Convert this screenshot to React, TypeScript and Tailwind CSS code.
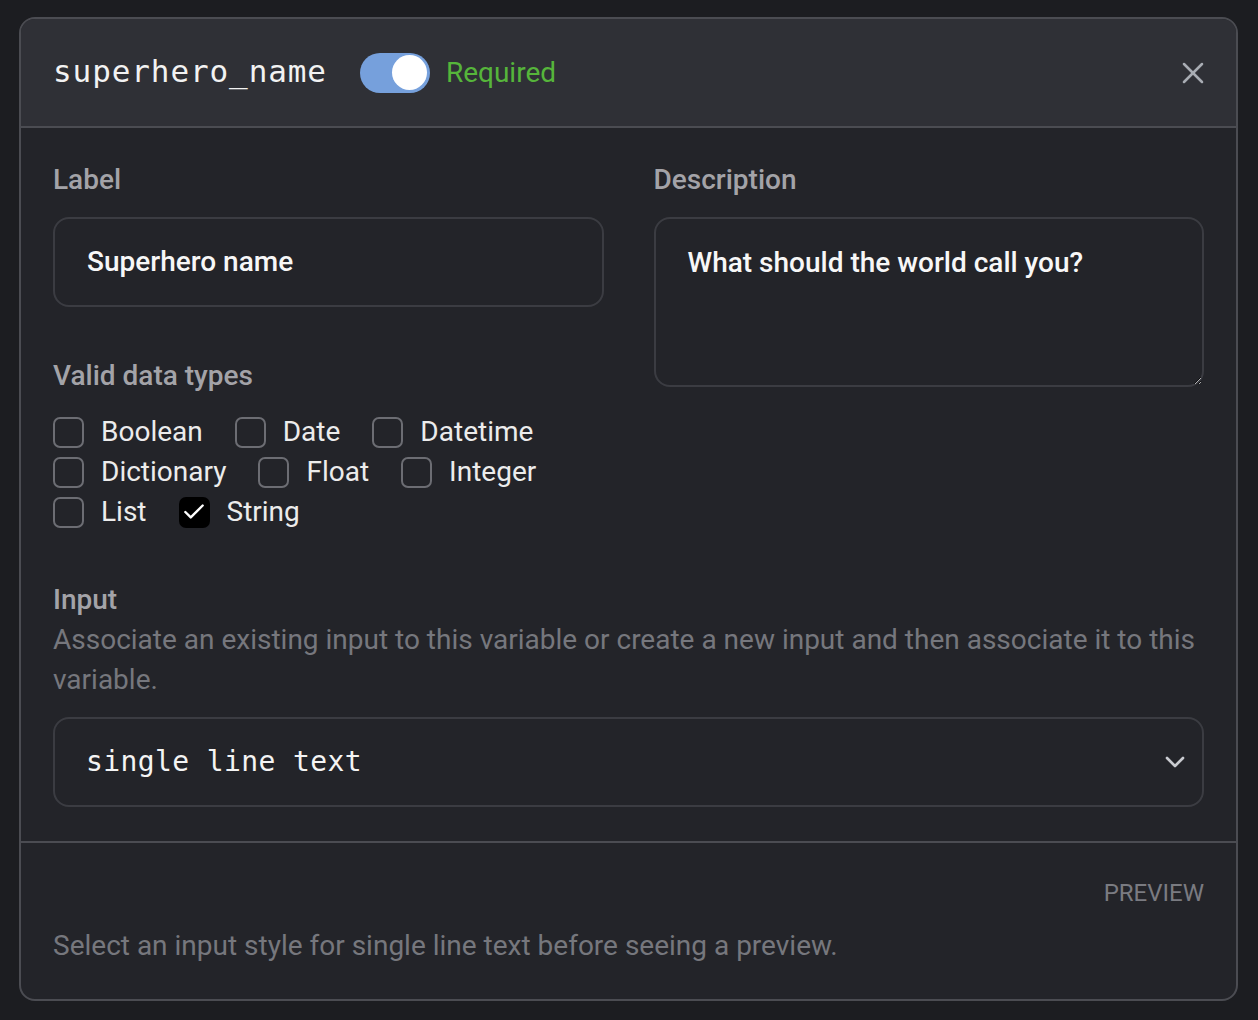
import React, { useState } from 'react';
import { X, ChevronDown, Check } from 'lucide-react';

const dataTypes = ['Boolean', 'Date', 'Datetime', 'Dictionary', 'Float', 'Integer', 'List', 'String'];

const sans = { fontFamily: 'Roboto, "Noto Sans", sans-serif' };
const mono = { fontFamily: '"DejaVu Sans Mono", "Liberation Mono", monospace' };

export default function App() {
  const [required, setRequired] = useState(true);
  const [checked, setChecked] = useState<string[]>(['String']);

  const toggle = (t: string) =>
    setChecked(prev => (prev.includes(t) ? prev.filter(x => x !== t) : [...prev, t]));

  return (
    <div className="min-h-[1020px] bg-[#1c1d21] px-[19px] pt-[17px] pb-[22px]" style={sans}>
      <div className="w-[1219px] rounded-[16px] border-2 border-[#4b4c52] bg-[#232429] overflow-hidden">
        {/* Header */}
        <div className="h-[109px] bg-[#2f3036] border-b-2 border-[#4b4c52] flex items-center pl-[32px] pr-[25px]">
          <span className="text-[31px] leading-[40px] -mt-[3px] text-[#f2f2f2] tracking-[0.9px]" style={mono}>superhero_name</span>
          <button
            onClick={() => setRequired(!required)}
            className={`ml-[33px] w-[70px] h-[40px] rounded-full flex items-center px-[3px] ${required ? 'bg-[#76a0dc] justify-end' : 'bg-[#55565c] justify-start'}`}
          >
            <span className="w-[35px] h-[35px] rounded-full bg-white block" />
          </button>
          <span className="ml-[16px] text-[28px] text-[#56b53b]">Required</span>
          <X className="ml-auto w-[36px] h-[36px] text-[#a9adb4]" strokeWidth={1.7} />
        </div>

        {/* Body */}
        <div className="px-[32px] pt-[32px] pb-[34px]">
          <div className="grid grid-cols-2 gap-x-[50px]">
            <div>
              <div className="text-[28px] leading-[40px] font-medium text-[#a3a3a8]">Label</div>
              <div className="mt-[17px] h-[90px] rounded-[16px] border-2 border-[#3b3c42] flex items-center px-[32px]">
                <span className="text-[28px] font-medium text-[#f7f7f7]">Superhero name</span>
              </div>
              <div className="mt-[49px] text-[28px] leading-[40px] font-medium text-[#a3a3a8]">Valid data types</div>
              <div className="mt-[16px] flex flex-wrap gap-x-[32px]">
                {dataTypes.map(t => {
                  const on = checked.includes(t);
                  return (
                    <label key={t} className="flex items-center h-[40px] cursor-pointer" onClick={() => toggle(t)}>
                      <span
                        className={`w-[31px] h-[31px] rounded-[7px] flex items-center justify-center ${on ? 'bg-black' : 'border-2 border-[#6c6d73]'}`}
                      >
                        {on && <Check className="w-[26px] h-[26px] text-white" strokeWidth={2.2} />}
                      </span>
                      <span className="ml-[17px] text-[28px] text-[#ececec]">{t}</span>
                    </label>
                  );
                })}
              </div>
            </div>
            <div>
              <div className="text-[28px] leading-[40px] font-medium text-[#a3a3a8]">Description</div>
              <textarea
                defaultValue="What should the world call you?"
                className="mt-[17px] block w-full h-[170px] rounded-[16px] border-2 border-[#3b3c42] bg-transparent px-[32px] pt-[23px] text-[28px] font-medium text-[#f7f7f7] outline-none resize-y"
              />
            </div>
          </div>

          <div className="mt-[48px] text-[28px] leading-[40px] font-medium text-[#a3a3a8]">Input</div>
          <div className="text-[28px] leading-[40px] text-[#76777d]">
            Associate an existing input to this variable or create a new input and then associate it to this variable.
          </div>
          <div className="mt-[17px] h-[90px] rounded-[16px] border-2 border-[#3b3c42] flex items-center pl-[31px] pr-[11px]">
            <span className="text-[28px] text-[#f4f4f4] tracking-[0.4px]" style={mono}>single line text</span>
            <ChevronDown className="ml-auto w-[32px] h-[32px] text-[#c9cbd0]" strokeWidth={2} />
          </div>
        </div>

        {/* Footer */}
        <div className="border-t-2 border-[#4b4c52] px-[32px] pt-[34px] pb-[33px]">
          <div className="text-right text-[24px] leading-[32px] text-[#7a7b81]">PREVIEW</div>
          <div className="mt-[17px] text-[28px] leading-[40px] text-[#76777d]">
            Select an input style for single line text before seeing a preview.
          </div>
        </div>
      </div>
    </div>
  );
}
